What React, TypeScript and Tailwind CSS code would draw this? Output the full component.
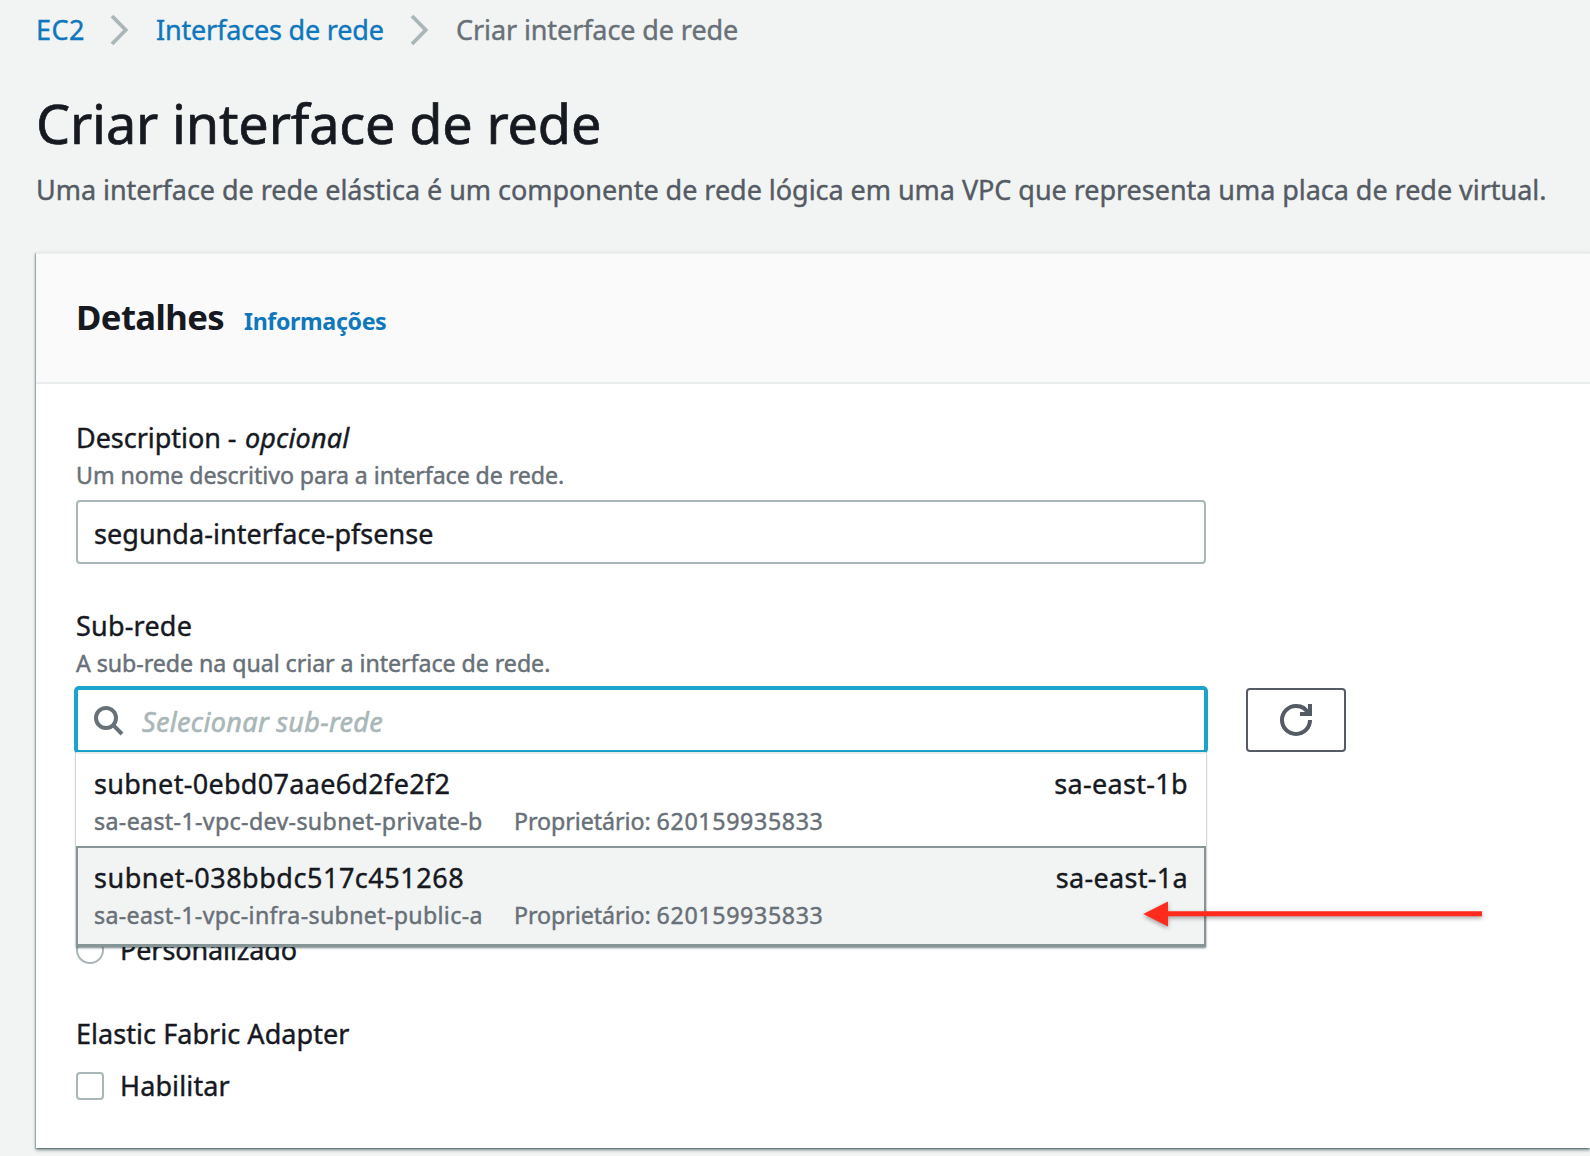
import React from "react";

const Chevron = () => (
  <svg className="h-[34px] w-[46px] shrink-0" viewBox="0 0 46 34" fill="none">
    <path d="M2 3 L15.7 17 L2 31" stroke="#aab7b8" strokeWidth="3.8" />
  </svg>
);

const SearchIcon = () => (
  <svg className="h-8 w-8 shrink-0" viewBox="0 0 16 16" fill="none" stroke="#687078" strokeWidth="2">
    <circle cx="7" cy="7" r="5" />
    <path d="M10.6 10.6 L15 15" />
  </svg>
);

const RefreshIcon = () => (
  <svg className="h-8 w-8" viewBox="0 0 16 16" fill="none" stroke="#545b64" strokeWidth="2">
    <path d="M10 5h5V0" />
    <path d="M15 8a6.957 6.957 0 0 1-7 7 6.957 6.957 0 0 1-7-7 6.957 6.957 0 0 1 7-7 6.87 6.87 0 0 1 6.3 4" />
  </svg>
);

const Arrow = () => (
  <svg
    className="pointer-events-none absolute top-[209px] left-[1062px] h-[40px] w-[350px] drop-shadow-[0_2px_2px_rgba(0,0,0,0.35)]"
    viewBox="0 0 350 40"
  >
    <path d="M5.3 17 L30 4.5 V14.3 H344 V19.3 H30 V29.5 Z" fill="#ff2b1d" />
  </svg>
);

type OptionProps = {
  id: string;
  idClass: string;
  zone: string;
  name: string;
  nameClass: string;
  rowClass: string;
};

const Option = ({ id, idClass, zone, name, nameClass, rowClass }: OptionProps) => (
  <div className={rowClass}>
    <div className="flex justify-between leading-10 text-[#16191f]">
      <span className={idClass}>{id}</span>
      <span className="tracking-[0.32px]">{zone}</span>
    </div>
    <div className="mt-px flex text-[23.2px] leading-8 text-[#687078] [-webkit-text-stroke:0.45px]">
      <span className={nameClass}>{name}</span>
      <span className="tracking-[-0.05px]">
        Proprietário: <span className="tracking-[0.65px]">620159935833</span>
      </span>
    </div>
  </div>
);

export default function App() {
  return (
    <div className="h-[1156px] w-[1590px] overflow-hidden bg-[#f2f4f3] font-['Noto_Sans','Open_Sans',sans-serif] text-[27px] whitespace-nowrap text-[#16191f] [-webkit-text-stroke:0.4px]">
      <nav className="flex h-[51px] items-center pt-2 pl-9 leading-[44px]">
        <a className="w-[74px] tracking-[0.4px] text-[#0e77bd]">EC2</a>
        <Chevron />
        <a className="w-[254px] tracking-[-0.18px] text-[#0e77bd]">Interfaces de rede</a>
        <Chevron />
        <span className="tracking-[-0.1px] text-[#687078]">Criar interface de rede</span>
      </nav>

      <header className="pt-9 pl-9">
        <h1 className="text-[54px] leading-[72px] tracking-[-0.16px] [-webkit-text-stroke:0.7px]">
          Criar interface de rede
        </h1>
        <p className="mt-[9px] leading-[44px] tracking-[-0.04px] text-[#545b64]">
          Uma interface de rede elástica é um componente de rede lógica em uma VPC que representa uma placa de rede
          virtual.
        </p>
      </header>

      <section className="mt-10 ml-9 h-[896px] border-t-2 border-[#eaeded] bg-white shadow-[0_2px_3px_rgba(0,28,36,0.5),-1px_1px_1px_rgba(0,28,36,0.2)]">
        <div className="flex h-[130px] items-baseline border-b-2 border-[#eaeded] bg-[#fafafa] px-10 pt-[41px]">
          <h2 className="w-[168px] text-[34.7px] leading-[44px] font-bold tracking-[-0.6px] [-webkit-text-stroke:0]">
            Detalhes
          </h2>
          <a className="text-[23.2px] font-bold tracking-[-0.36px] text-[#0e77bd] [-webkit-text-stroke:0]">Informações</a>
        </div>

        <div className="pt-[34px] pl-10">
          <div className="leading-10 tracking-[-0.04px]">
            Description - <i className="ml-[1.5px] tracking-[0.15px]">opcional</i>
          </div>
          <div className="mt-px text-[23.2px] leading-8 tracking-[-0.07px] text-[#687078] [-webkit-text-stroke:0.45px]">
            Um nome descritivo para a interface de rede.
          </div>
          <div className="mt-[9px] flex h-16 w-[1130px] items-center rounded-[4px] border-2 border-[#aab7b8] px-4 tracking-[0.04px]">
            <span className="mt-1">segunda-interface-pfsense</span>
          </div>

          <div className="mt-[42px] leading-10 tracking-[0.2px]">Sub-rede</div>
          <div className="mt-px text-[23.2px] leading-8 tracking-[-0.05px] text-[#687078] [-webkit-text-stroke:0.45px]">
            A sub-rede na qual criar a interface de rede.
          </div>
          <div className="mt-[9px] flex gap-10">
            <div className="relative w-[1130px]">
              <div className="flex h-16 items-center rounded-[3px] border-2 border-[#1aa3cb] bg-white pl-[14px] shadow-[0_0_0_2px_#1aa3cb]">
                <SearchIcon />
                <i className="mt-1 ml-[18px] tracking-[0.33px] text-[#aab7b8] [-webkit-text-stroke:0.6px]">Selecionar sub-rede</i>
              </div>
              <div className="absolute top-full left-0 z-10 w-[1130px] border-t-2 border-[#eaeded] bg-white shadow-[0_1px_2px_rgba(0,28,36,0.55)]">
                <Option
                  id="subnet-0ebd07aae6d2fe2f2"
                  idClass="tracking-[0.3px]"
                  zone="sa-east-1b"
                  name="sa-east-1-vpc-dev-subnet-private-b"
                  nameClass="w-[420px] tracking-[0.35px]"
                  rowClass="h-[92px] pt-[10px] pr-[18px] pl-[18px]"
                />
                <Option
                  id="subnet-038bbdc517c451268"
                  idClass="tracking-[0.52px]"
                  zone="sa-east-1a"
                  name="sa-east-1-vpc-infra-subnet-public-a"
                  nameClass="w-[420px] tracking-[0.33px]"
                  rowClass="h-[101px] border-2 border-b-3 border-[#879596] bg-[#f2f4f3] px-4 pt-[10px]"
                />
              </div>
              <div className="absolute top-0 left-0 z-20">
                <Arrow />
              </div>
            </div>
            <button className="flex h-16 w-[100px] items-center justify-center rounded-[4px] border-2 border-[#545b64] bg-white">
              <RefreshIcon />
            </button>
          </div>

          <div className="mt-[178px] flex h-10 items-center gap-4 leading-10">
            <span className="h-7 w-7 rounded-full border-2 border-[#aab7b8]" />
            <span className="tracking-[-0.11px]">Personalizado</span>
          </div>

          <div className="mt-11 leading-10 tracking-[0.05px]">Elastic Fabric Adapter</div>
          <div className="mt-3 flex h-10 items-center gap-4 leading-10">
            <span className="h-7 w-7 rounded-[4px] border-2 border-[#aab7b8]" />
            <span className="tracking-[0.12px]">Habilitar</span>
          </div>
        </div>
      </section>
    </div>
  );
}
